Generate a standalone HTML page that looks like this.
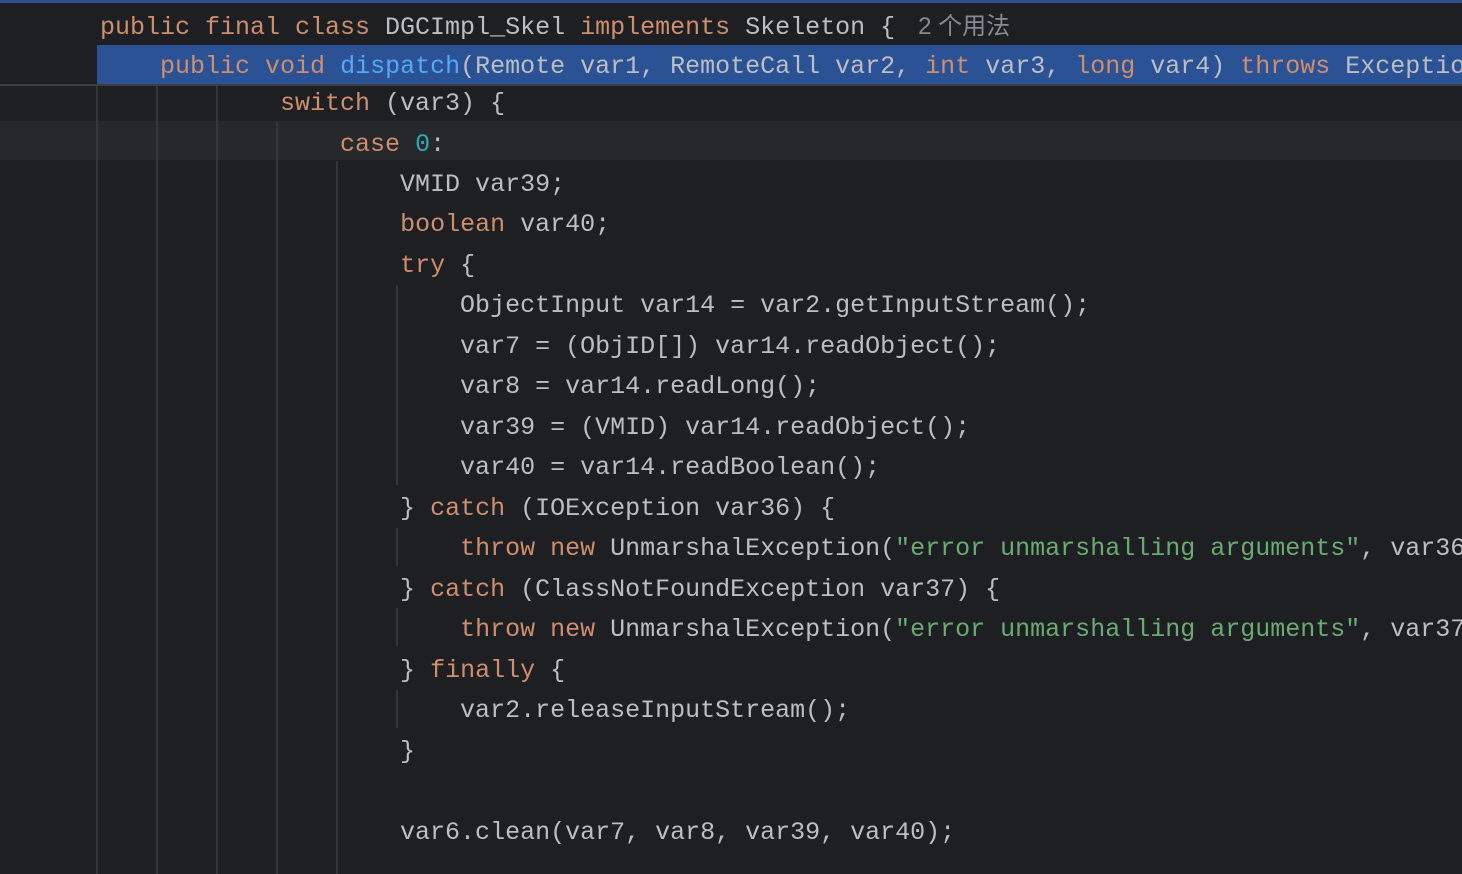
<!DOCTYPE html>
<html><head><meta charset="utf-8"><style>
body{margin:0;width:1462px;height:874px;background:#1e1f22;overflow:hidden;position:relative;font-family:"Liberation Mono","DejaVu Sans Mono",monospace;font-size:25px;color:#bcbec4}
.l{position:absolute;left:100px;height:40px;line-height:40px;white-space:pre}
.k{color:#cf8e6d}.f{color:#56a8f5}.n{color:#2aacb8}.s{color:#6aab73}
.h{color:#868a91;font-family:"Liberation Sans","Noto Sans CJK SC",sans-serif;font-size:24px;margin-left:8px}
.g{position:absolute;width:2px;background:#35363a}
</style></head><body>
<div style="position:absolute;left:0;top:0;width:1462px;height:3px;background:#2e4f8f"></div>
<div style="position:absolute;left:97px;top:45px;width:1365px;height:39px;background:#2b5294"></div>
<div style="position:absolute;left:0;top:84px;width:1462px;height:2px;background:#3c3d41"></div>
<div style="position:absolute;left:0;top:121px;width:1462px;height:39px;background:#26282c"></div>
<div class="g" style="left:96px;top:86px;height:788px"></div>
<div class="g" style="left:156px;top:86px;height:788px"></div>
<div class="g" style="left:216px;top:86px;height:788px"></div>
<div class="g" style="left:276px;top:121px;height:753px"></div>
<div class="g" style="left:336px;top:161px;height:713px"></div>
<div class="g" style="left:396px;top:285px;height:200px"></div>
<div class="g" style="left:396px;top:528px;height:38px"></div>
<div class="g" style="left:396px;top:608px;height:38px"></div>
<div class="g" style="left:396px;top:690px;height:38px"></div>
<div class="l" style="top:7px"><span class="k">public final class</span> DGCImpl_Skel <span class="k">implements</span> Skeleton { <span class="h">2 个用法</span></div>
<div class="l" style="top:47px">    <span class="k">public void</span> <span class="f">dispatch</span>(Remote var1, RemoteCall var2, <span class="k">int</span> var3, <span class="k">long</span> var4) <span class="k">throws</span> Exception {</div>
<div class="l" style="top:84px">            <span class="k">switch</span> (var3) {</div>
<div class="l" style="top:125px">                <span class="k">case</span> <span class="n">0</span>:</div>
<div class="l" style="top:165px">                    VMID var39;</div>
<div class="l" style="top:205px">                    <span class="k">boolean</span> var40;</div>
<div class="l" style="top:246px">                    <span class="k">try</span> {</div>
<div class="l" style="top:286px">                        ObjectInput var14 = var2.getInputStream();</div>
<div class="l" style="top:327px">                        var7 = (ObjID[]) var14.readObject();</div>
<div class="l" style="top:367px">                        var8 = var14.readLong();</div>
<div class="l" style="top:408px">                        var39 = (VMID) var14.readObject();</div>
<div class="l" style="top:448px">                        var40 = var14.readBoolean();</div>
<div class="l" style="top:489px">                    } <span class="k">catch</span> (IOException var36) {</div>
<div class="l" style="top:529px">                        <span class="k">throw new</span> UnmarshalException(<span class="s">"error unmarshalling arguments"</span>, var36);</div>
<div class="l" style="top:570px">                    } <span class="k">catch</span> (ClassNotFoundException var37) {</div>
<div class="l" style="top:610px">                        <span class="k">throw new</span> UnmarshalException(<span class="s">"error unmarshalling arguments"</span>, var37);</div>
<div class="l" style="top:651px">                    } <span class="k">finally</span> {</div>
<div class="l" style="top:691px">                        var2.releaseInputStream();</div>
<div class="l" style="top:732px">                    }</div>
<div class="l" style="top:813px">                    var6.clean(var7, var8, var39, var40);</div>
</body></html>
